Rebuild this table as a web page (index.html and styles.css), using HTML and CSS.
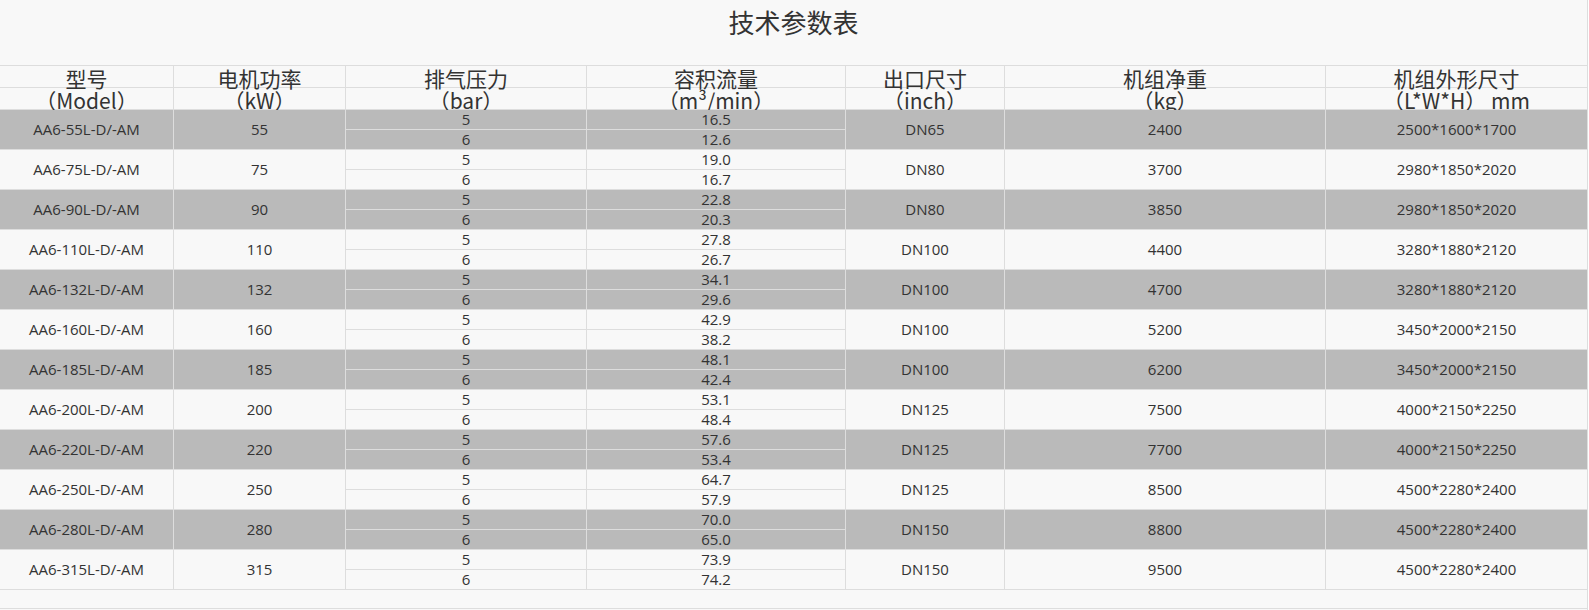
FILE: index.html
```html
<!DOCTYPE html>
<html lang="zh-CN">
<head>
<meta charset="utf-8">
<title>技术参数表</title>
<link rel="stylesheet" href="styles.css">
</head>
<body>
<div class="page">
  <h1 class="title">技术参数表</h1>
  <div class="spec">
    <div class="h">型号</div><div class="h">电机功率</div><div class="h">排气压力</div><div class="h">容积流量</div><div class="h">出口尺寸</div><div class="h">机组净重</div><div class="h last">机组外形尺寸</div>
    <div class="h">（Model）</div><div class="h">（kW）</div><div class="h">（bar）</div><div class="h">（m³/min）</div><div class="h">（inch）</div><div class="h">（kg）</div><div class="h last">（L*W*H） mm</div>

    <div class="c r2 g">AA6-55L-D/-AM</div><div class="c r2 g">55</div><div class="c s g">5</div><div class="c s g">16.5</div><div class="c r2 g">DN65</div><div class="c r2 g">2400</div><div class="c r2 g last">2500*1600*1700</div><div class="c s g">6</div><div class="c s g">12.6</div>

    <div class="c r2">AA6-75L-D/-AM</div><div class="c r2">75</div><div class="c s">5</div><div class="c s">19.0</div><div class="c r2">DN80</div><div class="c r2">3700</div><div class="c r2 last">2980*1850*2020</div><div class="c s">6</div><div class="c s">16.7</div>

    <div class="c r2 g">AA6-90L-D/-AM</div><div class="c r2 g">90</div><div class="c s g">5</div><div class="c s g">22.8</div><div class="c r2 g">DN80</div><div class="c r2 g">3850</div><div class="c r2 g last">2980*1850*2020</div><div class="c s g">6</div><div class="c s g">20.3</div>

    <div class="c r2">AA6-110L-D/-AM</div><div class="c r2">110</div><div class="c s">5</div><div class="c s">27.8</div><div class="c r2">DN100</div><div class="c r2">4400</div><div class="c r2 last">3280*1880*2120</div><div class="c s">6</div><div class="c s">26.7</div>

    <div class="c r2 g">AA6-132L-D/-AM</div><div class="c r2 g">132</div><div class="c s g">5</div><div class="c s g">34.1</div><div class="c r2 g">DN100</div><div class="c r2 g">4700</div><div class="c r2 g last">3280*1880*2120</div><div class="c s g">6</div><div class="c s g">29.6</div>

    <div class="c r2">AA6-160L-D/-AM</div><div class="c r2">160</div><div class="c s">5</div><div class="c s">42.9</div><div class="c r2">DN100</div><div class="c r2">5200</div><div class="c r2 last">3450*2000*2150</div><div class="c s">6</div><div class="c s">38.2</div>

    <div class="c r2 g">AA6-185L-D/-AM</div><div class="c r2 g">185</div><div class="c s g">5</div><div class="c s g">48.1</div><div class="c r2 g">DN100</div><div class="c r2 g">6200</div><div class="c r2 g last">3450*2000*2150</div><div class="c s g">6</div><div class="c s g">42.4</div>

    <div class="c r2">AA6-200L-D/-AM</div><div class="c r2">200</div><div class="c s">5</div><div class="c s">53.1</div><div class="c r2">DN125</div><div class="c r2">7500</div><div class="c r2 last">4000*2150*2250</div><div class="c s">6</div><div class="c s">48.4</div>

    <div class="c r2 g">AA6-220L-D/-AM</div><div class="c r2 g">220</div><div class="c s g">5</div><div class="c s g">57.6</div><div class="c r2 g">DN125</div><div class="c r2 g">7700</div><div class="c r2 g last">4000*2150*2250</div><div class="c s g">6</div><div class="c s g">53.4</div>

    <div class="c r2">AA6-250L-D/-AM</div><div class="c r2">250</div><div class="c s">5</div><div class="c s">64.7</div><div class="c r2">DN125</div><div class="c r2">8500</div><div class="c r2 last">4500*2280*2400</div><div class="c s">6</div><div class="c s">57.9</div>

    <div class="c r2 g">AA6-280L-D/-AM</div><div class="c r2 g">280</div><div class="c s g">5</div><div class="c s g">70.0</div><div class="c r2 g">DN150</div><div class="c r2 g">8800</div><div class="c r2 g last">4500*2280*2400</div><div class="c s g">6</div><div class="c s g">65.0</div>

    <div class="c r2">AA6-315L-D/-AM</div><div class="c r2">315</div><div class="c s">5</div><div class="c s">73.9</div><div class="c r2">DN150</div><div class="c r2">9500</div><div class="c r2 last">4500*2280*2400</div><div class="c s">6</div><div class="c s">74.2</div>

    <div class="foot"></div>
  </div>
</div>
</body>
</html>
```

FILE: styles.css
```css
html, body {
  margin: 0;
  padding: 0;
  background: #ffffff;
}
body {
  font-family: "Open Sans", "Noto Sans CJK SC", sans-serif;
  color: #333333;
}
.page {
  width: 1587px;
  height: 610px;
  background: #f8f8f8;
  border-right: 1px solid #dddddd;
}
.title {
  margin: 0;
  height: 65px;
  box-sizing: border-box;
  padding-top: 4px;
  text-align: center;
  font-family: "Noto Sans CJK SC", sans-serif;
  font-weight: 400;
  font-size: 26px;
  line-height: 36px;
  color: #333333;
}
.spec {
  display: grid;
  grid-template-columns: 174px 172px 241px 259px 159px 321px 261px;
  grid-template-rows: 22px 22px repeat(24, 20px) 19px;
  border-top: 1px solid #dddddd;
}
.h, .c {
  box-sizing: border-box;
  border-right: 1px solid #dddddd;
  border-bottom: 1px solid #dddddd;
  display: flex;
  align-items: center;
  justify-content: center;
  white-space: nowrap;
}
.h {
  font-family: "Noto Sans CJK SC", sans-serif;
  font-size: 21px;
  line-height: 20px;
  padding-top: 2px;
  color: #333333;
}
.c {
  font-size: 15px;
  line-height: 19px;
  color: #333333;
}
.r2 {
  grid-row: span 2;
}
.g {
  background: #bababa;
}
.last {
  border-right: none;
}
.foot {
  grid-column: 1 / -1;
  box-sizing: border-box;
  border-bottom: 1px solid #dddddd;
}
```
